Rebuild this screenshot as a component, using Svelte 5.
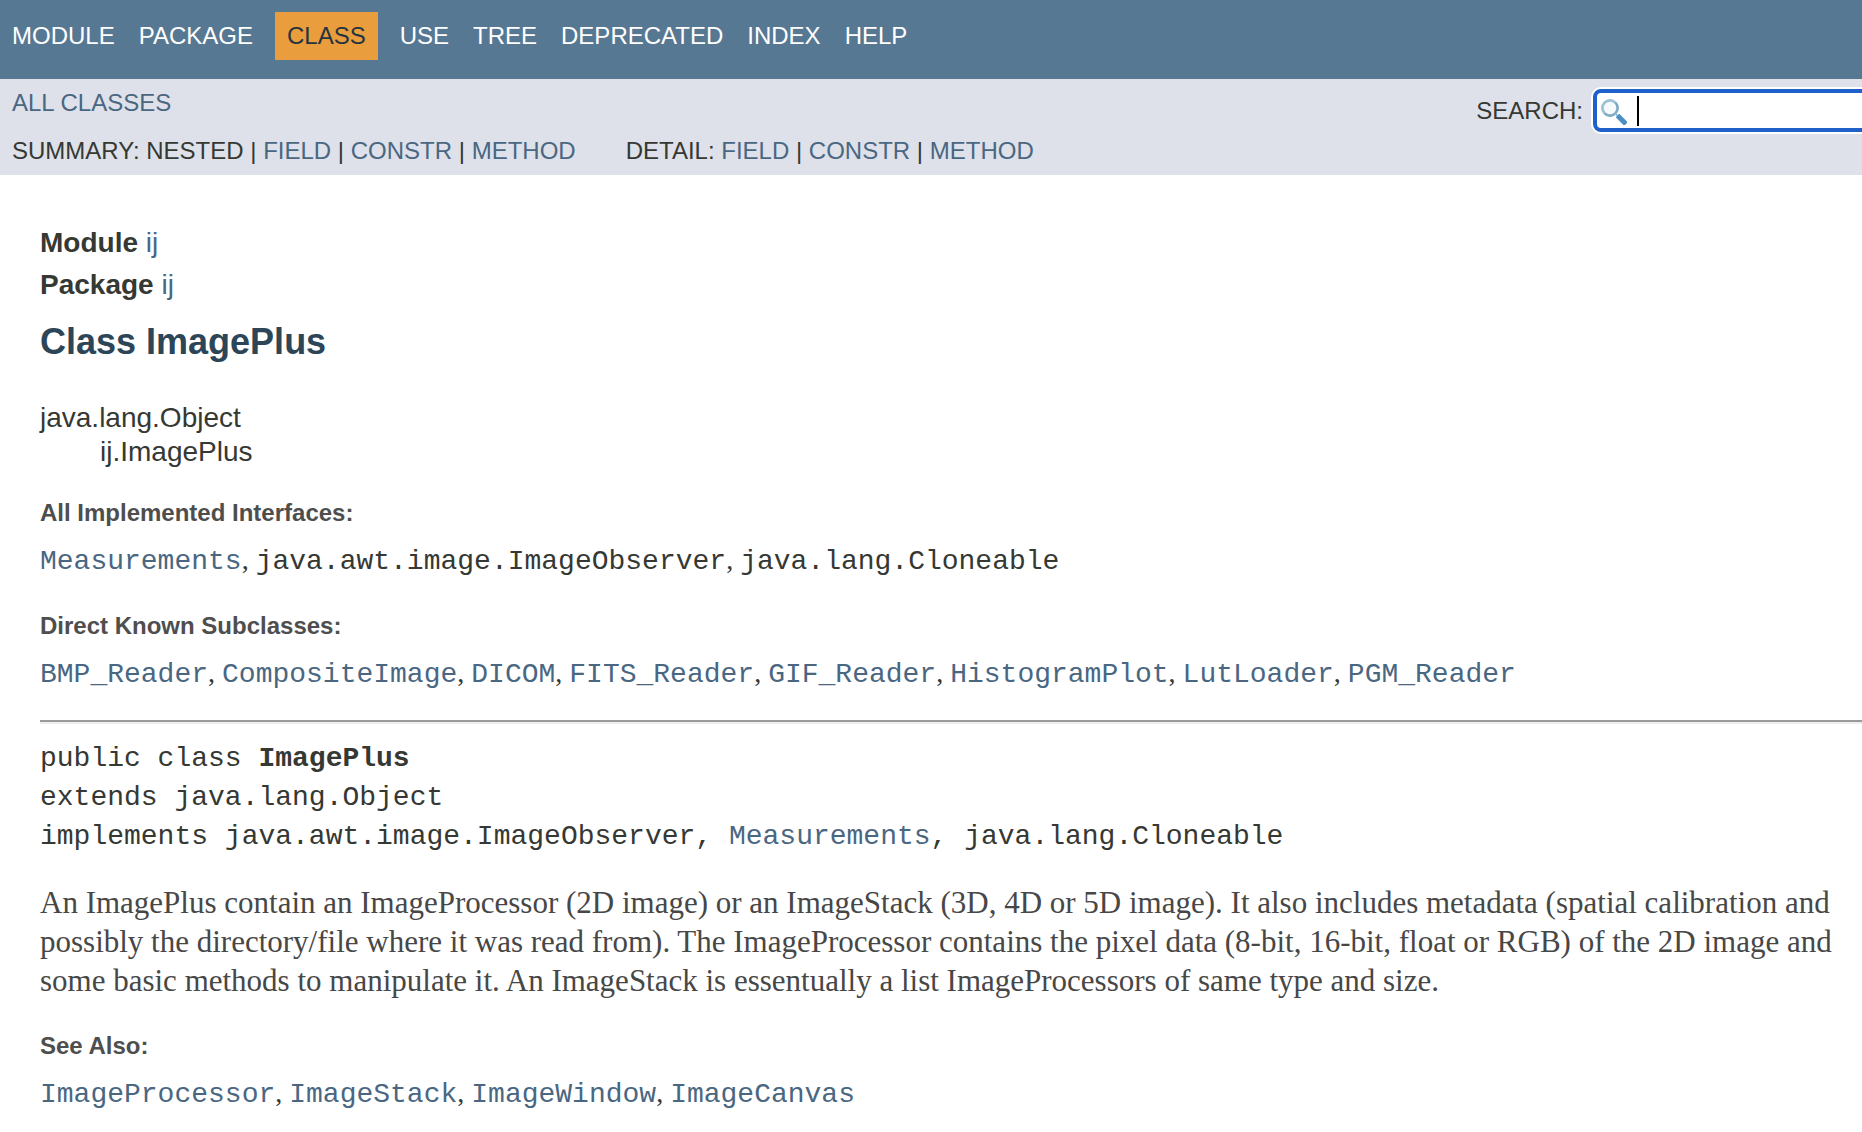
<script>
  const navItems = ['MODULE', 'PACKAGE', 'CLASS', 'USE', 'TREE', 'DEPRECATED', 'INDEX', 'HELP'];
  const current = 'CLASS';
  const members = ['FIELD', 'CONSTR', 'METHOD'];
  const interfaces = [
    { name: 'Measurements', link: true },
    { name: 'java.awt.image.ImageObserver', link: false },
    { name: 'java.lang.Cloneable', link: false }
  ];
  const toLinks = (names) => names.map((name) => ({ name, link: true }));
  const subclasses = toLinks([
    'BMP_Reader', 'CompositeImage', 'DICOM', 'FITS_Reader',
    'GIF_Reader', 'HistogramPlot', 'LutLoader', 'PGM_Reader'
  ]);
  const seeAlso = toLinks(['ImageProcessor', 'ImageStack', 'ImageWindow', 'ImageCanvas']);
  let query = $state('');
</script>

{#snippet typeList(label, types)}
  <dl>
    <dt>{label}</dt>
    <dd>
      {#each types as type, i}{#if i > 0}{', '}{/if}{#if type.link}<a href="#{type.name}"><code>{type.name}</code></a>{:else}<code>{type.name}</code>{/if}{/each}
    </dd>
  </dl>
{/snippet}

{#snippet memberLinks(prefix)}
  {#each members as member, i}{#if i > 0}{' | '}{/if}<a href="#{prefix}.{member.toLowerCase()}">{member}</a>{/each}
{/snippet}

<header>
  <nav class="top-nav" aria-label="Main">
    <ul>
      {#each navItems as item}
        {#if item === current}
          <li class="current" aria-current="page">{item}</li>
        {:else}
          <li><a href="#{item.toLowerCase()}">{item}</a></li>
        {/if}
      {/each}
    </ul>
  </nav>
  <div class="sub-nav">
    <div class="sub-links">
      <div><a href="#all-classes">ALL CLASSES</a></div>
      <div class="member-row">
        <div>SUMMARY: NESTED | {@render memberLinks('summary')}</div>
        <div>DETAIL: {@render memberLinks('detail')}</div>
      </div>
    </div>
    <form class="search" role="search" onsubmit={(e) => e.preventDefault()}>
      <label for="search">SEARCH:</label>
      <div class="field">
        <input id="search" type="text" autocomplete="off" bind:value={query} />
        <svg class="glass" viewBox="0 0 26 26" aria-hidden="true">
          <circle cx="9" cy="9" r="7.6" fill="#f6fafc" stroke="#9cc0d6" stroke-width="2.8" />
          <path d="M3.6 14.4A7.6 7.6 0 0 0 14.4 3.6" fill="none" stroke="#7fa9c2" stroke-width="2" />
          <path d="M14.5 14.5l2.5 2.5" stroke="#9cc0d6" stroke-width="2" />
          <path d="M16.5 16.5l8.5 8.5" stroke="#4a8fc4" stroke-width="5" />
        </svg>
        {#if !query}<span class="caret"></span>{/if}
      </div>
    </form>
  </div>
</header>

<main>
  <div class="origin"><b>Module</b> <a href="#module-ij">ij</a></div>
  <div class="origin"><b>Package</b> <a href="#package-ij">ij</a></div>
  <h1>Class ImagePlus</h1>

  <ul class="inheritance">
    <li>java.lang.Object
      <ul><li>ij.ImagePlus</li></ul>
    </li>
  </ul>

  {@render typeList('All Implemented Interfaces:', interfaces)}
  {@render typeList('Direct Known Subclasses:', subclasses)}

  <hr />

  <pre>public class <b>ImagePlus</b>
extends java.lang.Object
implements java.awt.image.ImageObserver, <a href="#Measurements">Measurements</a>, java.lang.Cloneable</pre>

  <p>
    An ImagePlus contain an ImageProcessor (2D image) or an ImageStack (3D, 4D or 5D image). It also
    includes metadata (spatial calibration and possibly the directory/file where it was read from).
    The ImageProcessor contains the pixel data (8-bit, 16-bit, float or RGB) of the 2D image and some
    basic methods to manipulate it. An ImageStack is essentually a list ImageProcessors of same type
    and size.
  </p>

  {@render typeList('See Also:', seeAlso)}
</main>

<style>
  :global(body) {
    background: #fff;
    color: #353833;
    font-family: "Liberation Sans", Arial, sans-serif;
    font-size: 28px;
    overflow-x: hidden;
  }

  a {
    color: #4a6782;
    text-decoration: none;
  }

  ul {
    list-style: none;
    margin: 0;
    padding: 0;
  }

  header {
    font-size: 24px;
    line-height: 28px;
  }

  .top-nav {
    background: #577893;
    color: #fff;
    padding: 12px 12px 19px;
  }

  .top-nav ul {
    display: flex;
    gap: 24px;
  }

  .top-nav li {
    padding: 10px 0;
  }

  .top-nav a {
    color: #fff;
  }

  .top-nav .current {
    background: #e99d3c;
    color: #253441;
    margin: 0 -2px;
    padding: 10px 12px;
  }

  .sub-nav {
    background: #dee1e9;
    display: flex;
    justify-content: space-between;
    overflow: hidden;
    padding: 10px 0 10px 12px;
  }

  .sub-links {
    display: grid;
    gap: 20px;
  }

  .member-row {
    display: flex;
    gap: 50px;
  }

  .search {
    align-items: center;
    align-self: flex-start;
    display: flex;
    gap: 10px;
    margin-right: -12px;
  }

  .field {
    position: relative;
  }

  input {
    background: #fff;
    border: 4px solid #1f60cb;
    border-radius: 8px;
    box-shadow: 0 0 0 2px #fff;
    box-sizing: border-box;
    color: #000;
    display: block;
    font: inherit;
    height: 43px;
    outline: 0;
    padding: 0 0 0 40px;
    width: 281px;
  }

  .glass {
    height: 26px;
    left: 8px;
    position: absolute;
    top: 10px;
    width: 26px;
  }

  .caret {
    background: #000;
    height: 30px;
    left: 44px;
    position: absolute;
    top: 7px;
    width: 2px;
  }

  main {
    padding: 47px 0 20px 40px;
  }

  .origin {
    line-height: 42px;
  }

  h1 {
    color: #2c4557;
    font-size: 36px;
    line-height: 42px;
    margin: 15px 0 38px;
  }

  .inheritance {
    line-height: 34px;
  }

  .inheritance ul {
    padding-left: 60px;
  }

  dl {
    margin: 30px 0 0;
  }

  dt {
    color: #4e4e4e;
    font-size: 24px;
    font-weight: bold;
    line-height: 28px;
  }

  dd {
    font-family: "Liberation Serif", Georgia, serif;
    line-height: 40px;
    margin: 13px 0 0;
  }

  code,
  pre {
    font-family: "Liberation Mono", "Courier New", monospace;
    font-size: 28px;
  }

  hr {
    border: 0;
    border-bottom: 2px solid #eee;
    border-top: 2px solid #9a9a9a;
    margin: 25px 0 15px;
  }

  pre {
    line-height: 39px;
    margin: 0;
  }

  p {
    color: #474747;
    font-family: Georgia, "Liberation Serif", serif;
    font-size: 31px;
    line-height: 39px;
    margin: 27px 20px 32px 0;
  }
</style>
